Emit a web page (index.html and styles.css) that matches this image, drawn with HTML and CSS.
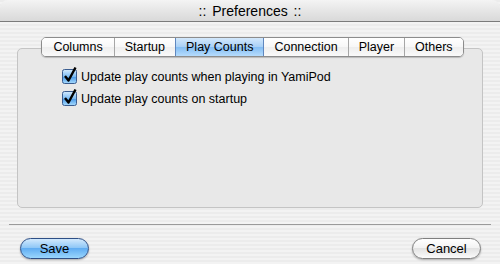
FILE: index.html
```html
<!DOCTYPE html>
<html lang="en">
<head>
    <meta charset="UTF-8">
    <title>:: Preferences ::</title>
    <link rel="stylesheet" href="styles.css">
</head>
<body>
    <div class="window">
        <div class="titlebar">:: Preferences ::</div>

        <div class="content">
            <!-- Tabs -->
            <div class="tabs">
                <span class="tab">Columns</span>
                <span class="tab">Startup</span>
                <span class="tab active">Play Counts</span>
                <span class="tab">Connection</span>
                <span class="tab">Player</span>
                <span class="tab">Others</span>
            </div>

            <div class="pane">
                <label class="check">
                    <svg class="box" width="16" height="18" viewBox="0 0 16 18">
                        <defs>
                            <linearGradient id="cb" x1="0" y1="0" x2="0" y2="1">
                                <stop offset="0" stop-color="#d6ebfd"/>
                                <stop offset="0.5" stop-color="#7cbcf4"/>
                                <stop offset="0.55" stop-color="#4d9ce9"/>
                                <stop offset="1" stop-color="#a9dcfd"/>
                            </linearGradient>
                        </defs>
                        <rect x="0.5" y="3.5" width="14" height="14" rx="2" fill="url(#cb)" stroke="#3a5c8f"/>
                        <path d="M3 10 L6.5 14.5 L13.5 1.5" fill="none" stroke="#000" stroke-width="2.4" stroke-linejoin="round"/>
                    </svg>
                    Update play counts when playing in YamiPod
                </label>
                <label class="check">
                    <svg class="box" width="16" height="18" viewBox="0 0 16 18">
                        <rect x="0.5" y="3.5" width="14" height="14" rx="2" fill="url(#cb)" stroke="#3a5c8f"/>
                        <path d="M3 10 L6.5 14.5 L13.5 1.5" fill="none" stroke="#000" stroke-width="2.4" stroke-linejoin="round"/>
                    </svg>
                    Update play counts on startup
                </label>
            </div>

            <div class="separator"></div>

            <div class="buttons">
                <button class="btn default">Save</button>
                <button class="btn">Cancel</button>
            </div>
        </div>
    </div>
</body>
</html>
```

FILE: styles.css
```css
body {
    margin: 0;
    font-family: "Liberation Sans", Arial, sans-serif;
    font-size: 12.5px;
    color: #000;
}
.window {
    width: 500px;
    height: 264px;
    overflow: hidden;
    background: repeating-linear-gradient(#ececec 0, #ececec 2px, #f3f3f3 2px, #f3f3f3 4px);
}
.titlebar {
    height: 21px;
    line-height: 22px;
    text-align: center;
    font-size: 14px;
    border-radius: 8px 8px 0 0;
    border-bottom: 1px solid #7b7b7b;
    background: linear-gradient(#f4f4f4, #e6e6e6 50%, #d9d9d9);
    word-spacing: 2px;
}
.content {
    padding: 15px 17px 0 17px;
    display: flex;
    flex-direction: column;
}
.tabs {
    display: flex;
    align-self: center;
    margin-left: 5px;
    margin-bottom: -9px;
    position: relative;
    z-index: 1;
    height: 18px;
    border: 1px solid #8c8c8c;
    border-radius: 5px;
    overflow: hidden;
    box-shadow: 0 1px 1px rgba(0,0,0,0.2);
}
.tab {
    display: flex;
    align-items: center;
    justify-content: center;
    padding: 0 10px;
    background: linear-gradient(#ffffff, #f7f7f7 50%, #ededed 50%, #fafafa);
    border-left: 1px solid #a6a6a6;
    line-height: 18px;
}
.tab:first-child {
    border-left: none;
    padding: 0 11px;
}
.tab.active {
    background: linear-gradient(#d3e8fc, #a8d0f6 50%, #82bcf3 50%, #b6dcfc);
    border-left-color: #5f87bf;
}
.tab.active + .tab {
    border-left-color: #5f87bf;
}
.pane {
    height: 141px;
    border: 1px solid #c4c4c4;
    border-radius: 5px;
    background: #e8e8e8;
    padding: 17px 0 0 44px;
    display: flex;
    flex-direction: column;
    gap: 4px;
}
.check {
    display: flex;
    align-items: flex-end;
    height: 18px;
    gap: 3px;
}
.check .box {
    flex: none;
}
.separator {
    margin: 16px -8px 0 -8px;
    border-top: 1px solid #9a9a9a;
}
.buttons {
    display: flex;
    justify-content: space-between;
    margin-top: 13px;
    padding: 0 2px 0 3px;
}
.btn {
    width: 69px;
    height: 21px;
    border-radius: 11px;
    border: 1px solid #7f7f7f;
    font-family: "Liberation Sans", Arial, sans-serif;
    font-size: 13px;
    padding: 0;
    background: linear-gradient(#ffffff, #f2f2f2 50%, #e2e2e2 50%, #fbfbfb);
    box-shadow: 0 1px 2px rgba(0,0,0,0.3);
}
.btn.default {
    border-color: #2e4f86;
    background: linear-gradient(#d2e9fd, #90c8f7 45%, #61adf2 50%, #9ad6fd);
}
```
